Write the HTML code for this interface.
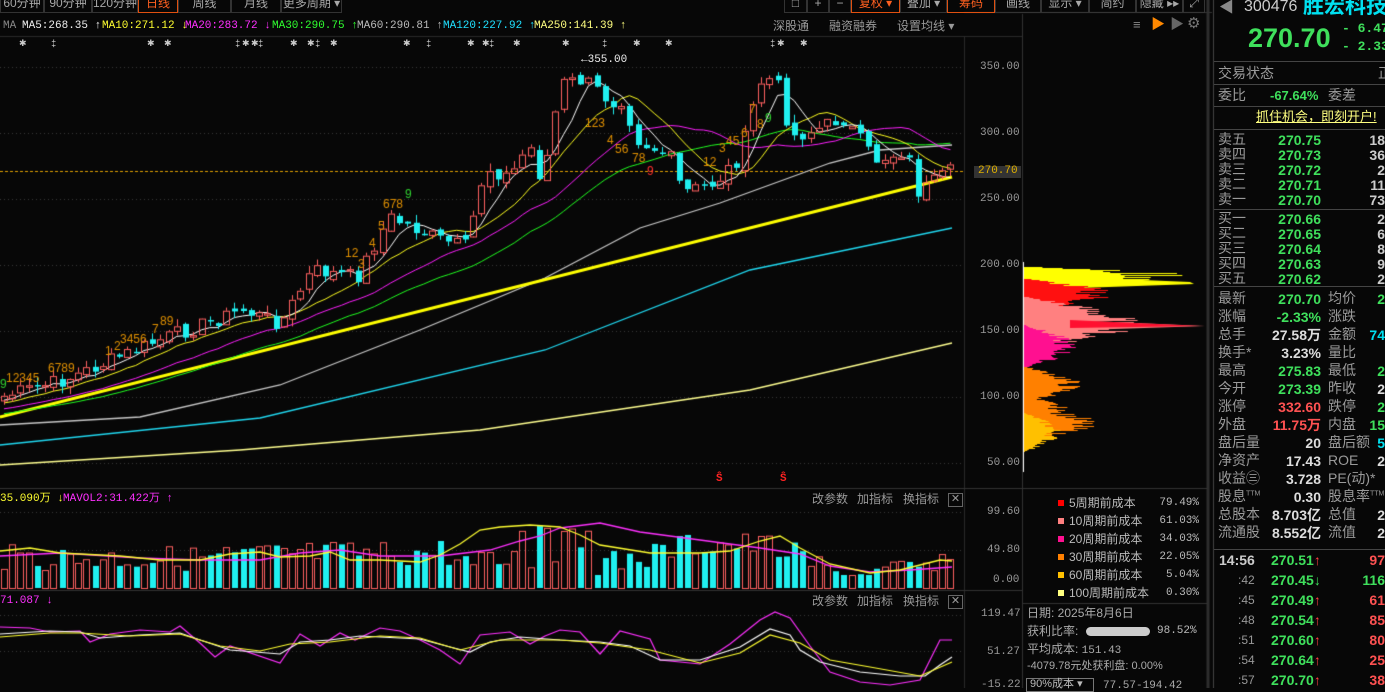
<!DOCTYPE html>
<html><head><meta charset="utf-8">
<style>
*{margin:0;padding:0;box-sizing:border-box}
body{width:1385px;height:688px;background:#070707;overflow:hidden;position:relative;font-family:"Liberation Sans","Noto Sans CJK SC",sans-serif;color:#a8a8a8}
.a{position:absolute;white-space:nowrap;line-height:1}
.m{font-family:"Liberation Mono","Noto Sans CJK SC",monospace}
canvas{position:absolute;left:0;top:0}
.g{color:#3fe05c}.r{color:#ff5252}.c{color:#00e0f0}
.lbl{font-size:14px;color:#9a9a9a}
.val{font-size:14px;font-weight:bold;text-align:right;width:100px}
.tab{position:absolute;top:-5px;height:18px;border:1px solid #333;font-size:12px;color:#a8a8a8;text-align:center;line-height:14px;white-space:nowrap;overflow:hidden}
</style></head><body>
<canvas id="cv" width="1385" height="688"></canvas>

<div class="tab" style="left:0;width:44px">60分钟</div>
<div class="tab" style="left:44px;width:48px">90分钟</div>
<div class="tab" style="left:92px;width:46px">120分钟</div>
<div class="tab" style="left:138px;width:40px;border-color:#e05010;color:#ff6020">日线</div>
<div class="tab" style="left:178px;width:53px">周线</div>
<div class="tab" style="left:231px;width:50px">月线</div>
<div class="tab" style="left:281px;width:61px">更多周期 ▾</div>
<div class="tab" style="left:784px;width:23px">□</div>
<div class="tab" style="left:807px;width:22px">+</div>
<div class="tab" style="left:829px;width:22px">−</div>
<div class="tab" style="left:851px;width:49px;border-color:#e05010;color:#ff6020">复权 ▾</div>
<div class="tab" style="left:900px;width:47px">叠加 ▾</div>
<div class="tab" style="left:947px;width:48px;border-color:#e05010;color:#ff6020">筹码</div>
<div class="tab" style="left:995px;width:46px">画线</div>
<div class="tab" style="left:1041px;width:48px">显示 ▾</div>
<div class="tab" style="left:1089px;width:47px">简约</div>
<div class="tab" style="left:1136px;width:47px">隐藏 ▸▸</div>
<div class="tab" style="left:1183px;width:22px">⤢</div>

<div class="a m" style="left:3px;top:21px;font-size:11px;color:#888">MA</div>
<div class="a m" style="left:22px;top:21px;font-size:11px;color:#eee">MA5:268.35 ↑</div>
<div class="a m" style="left:102px;top:21px;font-size:11px;color:#ffff30">MA10:271.12 ↓</div>
<div class="a m" style="left:185px;top:21px;font-size:11px;color:#ff30ff">MA20:283.72 ↓</div>
<div class="a m" style="left:272px;top:21px;font-size:11px;color:#30ff30">MA30:290.75 ↑</div>
<div class="a m" style="left:357px;top:21px;font-size:11px;color:#bbb">MA60:290.81 ↑</div>
<div class="a m" style="left:443px;top:21px;font-size:11px;color:#20e0ff">MA120:227.92 ↑</div>
<div class="a m" style="left:534px;top:21px;font-size:11px;color:#ffff80">MA250:141.39 ↑</div>
<div class="a" style="left:773px;top:20px;font-size:12px;color:#999">深股通</div>
<div class="a" style="left:829px;top:20px;font-size:12px;color:#999">融资融券</div>
<div class="a" style="left:897px;top:20px;font-size:12px;color:#999">设置均线 ▾</div>

<div class="a m" id="stars" style="top:40px;font-size:11px;color:#ccc"></div>

<div class="a m" style="left:980px;top:62px;font-size:11px;color:#999">350.00</div>
<div class="a m" style="left:980px;top:128px;font-size:11px;color:#999">300.00</div>
<div class="a m" style="left:974px;top:166px;font-size:11px;color:#e0b000;background:#333;padding:0 3px 1px 4px">270.70</div>
<div class="a m" style="left:980px;top:194px;font-size:11px;color:#999">250.00</div>
<div class="a m" style="left:980px;top:260px;font-size:11px;color:#999">200.00</div>
<div class="a m" style="left:980px;top:326px;font-size:11px;color:#999">150.00</div>
<div class="a m" style="left:980px;top:392px;font-size:11px;color:#999">100.00</div>
<div class="a m" style="left:987px;top:458px;font-size:11px;color:#999">50.00</div>
<div class="a m" style="left:581px;top:55px;font-size:11px;color:#eee">←355.00</div>
<div class="a m" style="left:716px;top:474px;font-size:11px;color:#f22;font-weight:bold">Ŝ</div>
<div class="a m" style="left:780px;top:474px;font-size:11px;color:#f22;font-weight:bold">Ŝ</div>

<div class="a m" style="left:0;top:494px;font-size:11px;color:#ffff30">35.090万 ↓</div>
<div class="a m" style="left:63px;top:494px;font-size:11px;color:#ff30ff">MAVOL2:31.422万 ↑</div>
<div class="a" style="left:812px;top:493px;font-size:12px;color:#999">改参数</div>
<div class="a" style="left:857px;top:493px;font-size:12px;color:#999">加指标</div>
<div class="a" style="left:903px;top:493px;font-size:12px;color:#999">换指标</div>
<div class="a" style="left:948px;top:493px;width:15px;height:14px;border:1px solid #666;font-size:11px;color:#999;text-align:center">✕</div>
<div class="a m" style="left:987px;top:507px;font-size:11px;color:#999">99.60</div>
<div class="a m" style="left:987px;top:545px;font-size:11px;color:#999">49.80</div>
<div class="a m" style="left:993px;top:575px;font-size:11px;color:#999">0.00</div>

<div class="a m" style="left:0;top:596px;font-size:11px;color:#ff30ff">71.087 ↓</div>
<div class="a" style="left:812px;top:595px;font-size:12px;color:#999">改参数</div>
<div class="a" style="left:857px;top:595px;font-size:12px;color:#999">加指标</div>
<div class="a" style="left:903px;top:595px;font-size:12px;color:#999">换指标</div>
<div class="a" style="left:948px;top:595px;width:15px;height:14px;border:1px solid #666;font-size:11px;color:#999;text-align:center">✕</div>
<div class="a m" style="left:981px;top:609px;font-size:11px;color:#999">119.47</div>
<div class="a m" style="left:987px;top:647px;font-size:11px;color:#999">51.27</div>
<div class="a m" style="left:981px;top:680px;font-size:11px;color:#999">-15.22</div>

<div id="leg"></div>
<div class="a" style="left:1027px;top:607px;font-size:12px;color:#aaa">日期: 2025年8月6日</div>
<div class="a" style="left:1027px;top:625px;font-size:12px;color:#aaa">获利比率:</div>
<div class="a" style="left:1086px;top:627px;width:64px;height:9px;border-radius:5px;background:#ccc"></div>
<div class="a m" style="left:1157px;top:626px;font-size:11px;color:#bbb">98.52%</div>
<div class="a" style="left:1027px;top:643px;font-size:12px;color:#aaa">平均成本: <span class="m" style="font-size:11px">151.43</span></div>
<div class="a" style="left:1027px;top:661px;font-size:11px;color:#aaa">-4079.78元处获利盘: 0.00%</div>
<div class="a" style="left:1026px;top:678px;width:68px;height:14px;border:1px solid #777;font-size:11px;color:#bbb;padding-left:3px">90%成本 ▾</div>
<div class="a m" style="left:1103px;top:681px;font-size:11px;color:#aaa">77.57-194.42</div>
<div class="a" style="left:1133px;top:18px;font-size:13px;color:#888">≡</div>
<div class="a" style="left:1151px;top:17px;font-size:14px;color:#f80">▶</div>
<div class="a" style="left:1170px;top:17px;font-size:14px;color:#666">▶</div>
<div class="a" style="left:1187px;top:16px;font-size:15px;color:#777">⚙</div>

<div class="a" style="left:1219px;top:0px;font-size:15px;color:#888">◀</div>
<div class="a" style="left:1244px;top:-1px;font-size:16px;color:#ccc">300476</div>
<div class="a c" style="left:1303px;top:-4px;font-size:21px;font-weight:bold">胜宏科技</div>
<div class="a g" style="left:1248px;top:25px;font-size:27px;font-weight:bold">270.70</div>
<div class="a g m" style="left:1342px;top:22px;font-size:13px;font-weight:bold">- 6.47</div>
<div class="a g m" style="left:1342px;top:40px;font-size:13px;font-weight:bold">- 2.33%</div>
<div id="rp"></div>

<script>
var cv=document.getElementById('cv'),x=cv.getContext('2d');
function L(a,b,c,d,col,w){x.strokeStyle=col;x.lineWidth=w||1;x.beginPath();x.moveTo(a,b);x.lineTo(c,d);x.stroke();}
function dots(y,x0,x1){x.fillStyle='#3a3a3a';for(var i=x0;i<x1;i+=4)x.fillRect(i,y,1,1);}
L(0,36.5,1022,36.5,'#2a2a2a');L(964.5,36,964.5,688,'#2a2a2a');L(1022.5,14,1022.5,688,'#333');
L(0,488.5,1022,488.5,'#333');L(0,590.5,1022,590.5,'#333');
L(1208,0,1208,688,'#2e2e2e',3);L(1213.5,0,1213.5,688,'#444');
L(964,12.5,1212,12.5,'#333');
L(1023,488.5,1207,488.5,'#333');L(1023,603.5,1207,603.5,'#333');
[67,133,199,265,331,397,463].forEach(function(y){dots(y,0,964)});
[512,550].forEach(function(y){dots(y,0,964)});[615,651].forEach(function(y){dots(y,0,964)});
x.fillStyle='#e0a000';for(var i=0;i<964;i+=5)x.fillRect(i,171,3,1);
var K=[[0,397],[64,380],[159,340],[242,310],[281,323],[312,270],[357,277],[389,217],[440,240],[466,247],[485,167],[510,177],[529,143],[542,183],[561,83],[584,80],[612,103],[619,93],[638,140],[670,157],[682,193],[714,183],[740,157],[759,83],[775,77],[791,137],[823,127],[842,117],[874,160],[906,150],[918,193],[937,180],[954,170]];
function ip(px){for(var i=1;i<K.length;i++)if(px<=K[i][0]){var a=K[i-1],b=K[i];return a[1]+(b[1]-a[1])*(px-a[0])/(b[0]-a[0]);}return K[K.length-1][1];}
var s=7;function rnd(){s=(s*9301+49297)%233280;return s/233280;}
var N=116,dx=8.23,C=[],O=[],X=[];
for(var i=0;i<N;i++){var px=4+i*dx;X.push(px);C.push(ip(px)+(rnd()-0.5)*16);}
var hist=[];for(var i=0;i<40;i++)hist.push(440-i*1.0+(rnd()-0.5)*6);
var all=hist.concat(C);
function sma(n){var r=[];for(var i=40;i<all.length;i++){var t=0;for(var j=0;j<n;j++)t+=all[i-j];r.push(t/n);}return r;}
function poly(pts,col,w){x.strokeStyle=col;x.lineWidth=w;x.beginPath();pts.forEach(function(p,i){i?x.lineTo(p[0],p[1]):x.moveTo(p[0],p[1])});x.stroke();}
poly([[0,465],[240,450],[480,430],[750,390],[952,343]],'#ffff90',1.3);
poly([[0,445],[260,418],[545,350],[750,270],[952,228]],'#20d8f0',1.3);
poly([[0,425],[140,417],[280,385],[420,330],[545,278],[640,228],[720,203],[830,163],[880,150],[952,145]],'#c8c8c8',1.3);
poly([[0,417],[952,177]],'#ffff00',3);
var m30=sma(30),m20=sma(20),m10=sma(10),m5=sma(5);
poly(m30.map(function(v,i){return[X[i],v]}),'#20ff20',1);
poly(m20.map(function(v,i){return[X[i],v]}),'#ff20ff',1);
poly(m10.map(function(v,i){return[X[i],v]}),'#ffff20',1);
poly(m5.map(function(v,i){return[X[i],v]}),'#ffffff',1);
for(var i=0;i<N;i++){var o=(i?C[i-1]:C[i]+5)+(rnd()-0.5)*6,c=C[i];var up=c<o;var t=Math.min(o,c),b=Math.max(o,c);if(b-t<1.5)b=t+1.5;var hi=t-rnd()*8,lo=b+rnd()*8;var px=Math.round(X[i]);
 if(up){L(px+0.5,hi,px+0.5,t,'#ff6060');L(px+0.5,b,px+0.5,lo,'#ff6060');x.strokeStyle='#ff6060';x.lineWidth=1;x.strokeRect(px-2.5,t+0.5,6,b-t);}
 else{L(px+0.5,hi,px+0.5,lo,'#20f0f0');x.fillStyle='#20f0f0';x.fillRect(px-2,t,6,b-t);}
 O.push(up);}
function tx(t,px,py,col,sz){x.fillStyle=col;x.font=(sz||12)+'px "Liberation Sans"';x.fillText(t,px,py);}
var nums=[["9",0,388,'#30d030'],["12345",6,382,'#e09000'],["6789",48,372,'#e09000'],["1",105,355,'#e09000'],["2",114,350,'#e09000'],["3456",120,343,'#e09000'],["7",152,333,'#e09000'],["89",160,325,'#e09000'],["12",345,257,'#e09000'],["3",358,268,'#e09000'],["4",369,247,'#e09000'],["5",378,230,'#e09000'],["678",383,208,'#e09000'],["9",405,198,'#30d030'],["123",585,127,'#e09000'],["4",607,144,'#e09000'],["56",615,153,'#e09000'],["78",632,162,'#e09000'],["9",647,175,'#ff3030'],["12",703,166,'#e09000'],["3",719,152,'#e09000'],["45",726,145,'#e09000'],["6",741,137,'#e09000'],["7",749,113,'#e09000'],["8",757,128,'#e09000'],["9",765,122,'#30d030']];
nums.forEach(function(n){tx(n[0],n[1],n[2],n[3],12)});
var env=[[0,552],[180,553],[300,548],[420,548],[440,545],[470,560],[500,555],[560,550],[600,560],[660,548],[680,540],[720,538],[770,540],[840,570],[910,565],[960,560]];
function ip2(px){for(var i=1;i<env.length;i++)if(px<=env[i][0]){var a=env[i-1],b=env[i];return a[1]+(b[1]-a[1])*(px-a[0])/(b[0]-a[0]);}return 560;}
for(var i=0;i<N;i++){var px=Math.round(X[i]);var e=ip2(px);var tp=e+(rnd()-0.3)*26;if(i>62&&i<72&&rnd()>0.4)tp-=35;tp=Math.max(512,Math.min(575,tp));
 if(O[i]){x.strokeStyle='#ff6060';x.lineWidth=1;x.strokeRect(px-2.5,tp+0.5,6,588-tp);}else{x.fillStyle='#20f0f0';x.fillRect(px-2,tp,6,588-tp);}}
poly([[0,556],[60,553],[140,558],[200,560],[260,560],[300,553],[340,550],[380,556],[440,556],[490,550],[520,541],[540,536],[560,528],[600,523],[640,532],[700,540],[760,548],[800,554],[830,566],[870,572],[910,570],[952,567]],'#ff30ff',1.3);
poly([[0,551],[30,548],[60,553],[120,556],[160,560],[200,560],[230,554],[260,552],[280,557],[310,556],[330,552],[350,560],[380,560],[420,562],[440,555],[460,544],[480,530],[500,527],[530,525],[560,527],[580,535],[600,545],[650,553],[700,553],[730,551],[760,541],[780,536],[800,548],[830,564],[870,573],[900,570],[940,560],[952,561]],'#ffff30',1.3);
function osc(pts,col){poly(pts,col,1.2)}
osc([[0,627],[30,628],[50,632],[80,631],[90,642],[110,634],[140,630],[170,632],[180,626],[200,643],[215,657],[230,646],[280,663],[300,634],[320,646],[340,633],[355,640],[380,628],[400,631],[420,640],[440,650],[460,664],[480,635],[510,632],[530,644],[545,636],[560,630],[580,632],[600,654],[620,631],[650,639],[660,660],[700,664],[730,644],[760,620],[775,612],[790,618],[810,646],[830,672],[860,682],[890,685],[920,680],[940,640],[952,640]],'#ff30ff');
osc([[0,634],[50,631],[80,632],[100,638],[140,635],[180,633],[200,640],[230,650],[280,654],[300,642],[330,640],[360,636],[380,637],[420,639],[450,647],[470,652],[490,642],[520,637],[560,640],[600,642],[630,646],[660,660],[700,660],[740,647],[770,629],[790,635],[800,650],[820,662],[860,672],[900,676],[925,676],[940,665],[952,657]],'#ffffff');
osc([[0,637],[50,633],[80,633],[130,636],[180,634],[220,646],[260,651],[290,644],[330,642],[380,636],[420,638],[460,650],[500,640],[560,640],[600,643],[650,650],[700,663],[740,653],[770,635],[800,643],[830,660],[870,667],[920,676],[952,662]],'#ffff30');
function chip(col,prof){x.fillStyle=col;prof.forEach(function(p){var y0=p[0],y1=p[1],w=p[2];for(var y=y0;y<y1;y++){var t=(y-y0)/(y1-y0);var ww=w*Math.sin(Math.PI*t)*(0.55+0.45*rnd());x.fillRect(1023,y,ww,1);}});}
chip('#ffff00',[[266,286,175]]);
x.fillStyle='#ffff00';x.beginPath();x.moveTo(1023,275);x.lineTo(1190,282);x.lineTo(1194,284);x.lineTo(1023,290);x.fill();
chip('#ff1010',[[278,310,95]]);
chip('#ff8080',[[296,350,120]]);
x.fillStyle='#ff8080';x.beginPath();x.moveTo(1023,318);x.lineTo(1205,326);x.lineTo(1023,332);x.fill();
x.fillStyle='#ff1030';x.beginPath();x.moveTo(1070,320);x.lineTo(1200,326);x.lineTo(1070,328);x.fill();
chip('#ff1090',[[324,368,55]]);
chip('#ff8000',[[366,402,60],[396,420,45],[405,440,75]]);
chip('#ffc000',[[412,452,40]]);
x.fillStyle='#fff';x.fillRect(1023,262,1,210);
var st=[19,51,147,164,235,242,251,258,290,307,315,330,403,426,467,482,489,513,562,602,633,665,770,777,800];
var sd=document.getElementById('stars');st.forEach(function(p,i){var d=document.createElement('div');d.className='a';d.style.left=p+'px';d.textContent=(i%3==1)?'‡':'✱';d.style.fontSize='9px';sd.appendChild(d);});
var lg=[['#f00','5周期前成本','79.49%'],['#ff8080','10周期前成本','61.03%'],['#ff1090','20周期前成本','34.03%'],['#ff8000','30周期前成本','22.05%'],['#ffc000','60周期前成本','5.04%'],['#ffff80','100周期前成本','0.30%']];
var h='';lg.forEach(function(l,i){var y=497+i*18;h+='<div class="a" style="left:1058px;top:'+(y+3)+'px;width:6px;height:6px;background:'+l[0]+'"></div><div class="a" style="left:1069px;top:'+y+'px;font-size:12px;color:#bbb">'+l[1]+'</div><div class="a m" style="left:1140px;top:'+(y+1)+'px;width:59px;text-align:right;font-size:11px;color:#bbb">'+l[2]+'</div>';});
document.getElementById('leg').innerHTML=h;
var r='';
function hl(y){r+='<div class="a" style="left:1214px;top:'+y+'px;width:171px;height:1px;background:#444"></div>';}
hl(61);hl(84);hl(106);hl(129);hl(209);hl(286);hl(549);
r+='<div class="a lbl" style="left:1218px;top:66px">交易状态</div><div class="a lbl" style="left:1378px;top:66px">正</div>';
r+='<div class="a lbl" style="left:1218px;top:88px">委比</div><div class="a g" style="left:1270px;top:89px;font-size:13px;font-weight:bold">-67.64%</div><div class="a lbl" style="left:1328px;top:88px">委差</div>';
r+='<div class="a" style="left:1256px;top:110px;font-size:13px;color:#ffff80;text-decoration:underline">抓住机会，即刻开户!</div>';
var ob=[['卖五','270.75','18'],['卖四','270.73','36'],['卖三','270.72','2'],['卖二','270.71','11'],['卖一','270.70','73']];
ob.forEach(function(o,i){var y=132+i*15;r+='<div class="a lbl" style="left:1218px;top:'+y+'px">'+o[0]+'</div><div class="a g val" style="left:1221px;top:'+(y+1)+'px">'+o[1]+'</div><div class="a" style="left:1360px;top:'+(y+1)+'px;width:25px;overflow:hidden;font-size:14px;font-weight:bold;color:#ccc;text-align:right">'+o[2]+'</div>';});
var bb=[['买一','270.66','2'],['买二','270.65','6'],['买三','270.64','8'],['买四','270.63','9'],['买五','270.62','2']];
bb.forEach(function(o,i){var y=211+i*15;r+='<div class="a lbl" style="left:1218px;top:'+y+'px">'+o[0]+'</div><div class="a g val" style="left:1221px;top:'+(y+1)+'px">'+o[1]+'</div><div class="a" style="left:1360px;top:'+(y+1)+'px;width:25px;overflow:hidden;font-size:14px;font-weight:bold;color:#ccc;text-align:right">'+o[2]+'</div>';});
var st2=[['最新','270.70','g','均价','2','g'],['涨幅','-2.33%','g','涨跌',''],['总手','27.58万','w','金额','74','c'],['换手*','3.23%','w','量比',''],['最高','275.83','g','最低','2','g'],['今开','273.39','g','昨收','2','w'],['涨停','332.60','r','跌停','2','g'],['外盘','11.75万','r','内盘','15','g'],['盘后量','20','w','盘后额','5','c'],['净资产','17.43','w','ROE','2','w'],['收益㊂','3.728','w','PE(动)*',''],['股息<sup style="font-size:7px">TTM</sup>','0.30','w','股息率<sup style="font-size:7px">TTM</sup>',''],['总股本','8.703亿','w','总值','2','w'],['流通股','8.552亿','w','流值','2','w']];
st2.forEach(function(o,i){var y=291+i*18;var cl=o[2]=='w'?'color:#ddd':'';r+='<div class="a lbl" style="left:1218px;top:'+y+'px">'+o[0]+'</div><div class="a val '+(o[2]=='w'?'':o[2])+'" style="left:1221px;top:'+(y+1)+'px;'+cl+'">'+o[1]+'</div><div class="a lbl" style="left:1328px;top:'+y+'px">'+o[3]+'</div>';if(o[4])r+='<div class="a val '+(o[5]=='w'?'':o[5])+'" style="left:1285px;top:'+(y+1)+'px;'+(o[5]=='w'?'color:#ddd':'')+'">'+o[4]+'</div>';});
var tk=[['14:56','270.51','↑','97'],[':42','270.45','↓','116'],[':45','270.49','↑','61'],[':48','270.54','↑','85'],[':51','270.60','↑','80'],[':54','270.64','↑','25'],[':57','270.70','↑','38']];
tk.forEach(function(o,i){var y=553+i*20;r+=(i==0?'<div class="a" style="left:1219px;top:'+y+'px;font-size:14px;font-weight:bold;color:#ccc">14:56</div>':'<div class="a" style="left:1238px;top:'+(y+1)+'px;font-size:12px;color:#999">'+o[0]+'</div>')+'<div class="a g" style="left:1271px;top:'+y+'px;font-size:14px;font-weight:bold">'+o[1]+'<span style="color:'+(o[2]=='↑'?'#ff4040':'#3fe05c')+'">'+o[2]+'</span></div><div class="a r" style="left:1340px;top:'+y+'px;width:45px;text-align:right;font-size:14px;font-weight:bold;'+(o[2]=='↓'?'color:#3fe05c':'')+'">'+o[3]+'</div>';});
document.getElementById('rp').innerHTML=r;
</script>
</body></html>
